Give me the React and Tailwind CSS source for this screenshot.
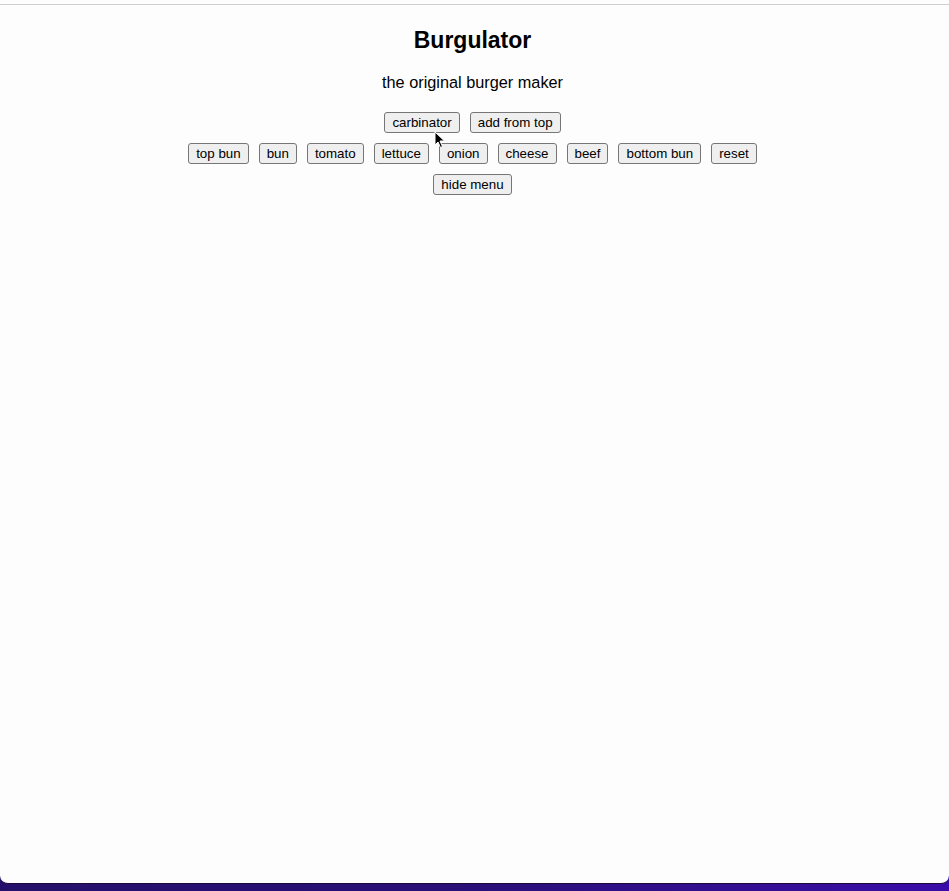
import React from 'react';

const ingredients = ['top bun', 'bun', 'tomato', 'lettuce', 'onion', 'cheese', 'beef', 'bottom bun', 'reset'];

const Btn = ({ children }) => (
  <button className="h-[21px] px-[7px] text-[13.33px] leading-none text-black bg-[#efefef] border border-[#767676] rounded-[3px] font-['Liberation_Sans',Arial,sans-serif]">
    {children}
  </button>
);

export default function App() {
  return (
    <div className="h-[891px] w-[949px] bg-gradient-to-r from-[#24106a] via-[#2a0f78] to-[#3a0ca8] overflow-hidden">
      <div className="relative h-[884px] bg-[#fdfdfd] rounded-b-[8px] border-b border-[#1a0b3a] pt-[4px] font-['Liberation_Sans',Arial,sans-serif] text-black">
        <div className="h-px bg-[#cfcfcf]" />
        <div className="flex flex-col items-center pr-[4px]">
          <h1 className="mt-[21px] text-[23px] leading-[28px] font-bold">Burgulator</h1>
          <p className="mt-[18px] text-[16.3px] leading-[20px]">the original burger maker</p>
          <div className="mt-[20px] flex flex-col items-center gap-[10px]">
            <div className="flex gap-[10px]">
              <Btn>carbinator</Btn>
              <Btn>add from top</Btn>
            </div>
            <div className="flex gap-[10px]">
              {ingredients.map((name) => (
                <Btn key={name}>{name}</Btn>
              ))}
            </div>
            <div className="flex gap-[10px]">
              <Btn>hide menu</Btn>
            </div>
          </div>
        </div>
        {/* mouse pointer */}
        <svg className="absolute left-[434px] top-[131px]" width="12" height="18" viewBox="0 0 12 18">
          <path d="M1 1 L1 14 L4 11 L6.5 16.5 L8.5 15.5 L6 10 L10.5 10 Z" fill="#000" stroke="#fff" strokeWidth="1" />
        </svg>
      </div>
    </div>
  );
}
